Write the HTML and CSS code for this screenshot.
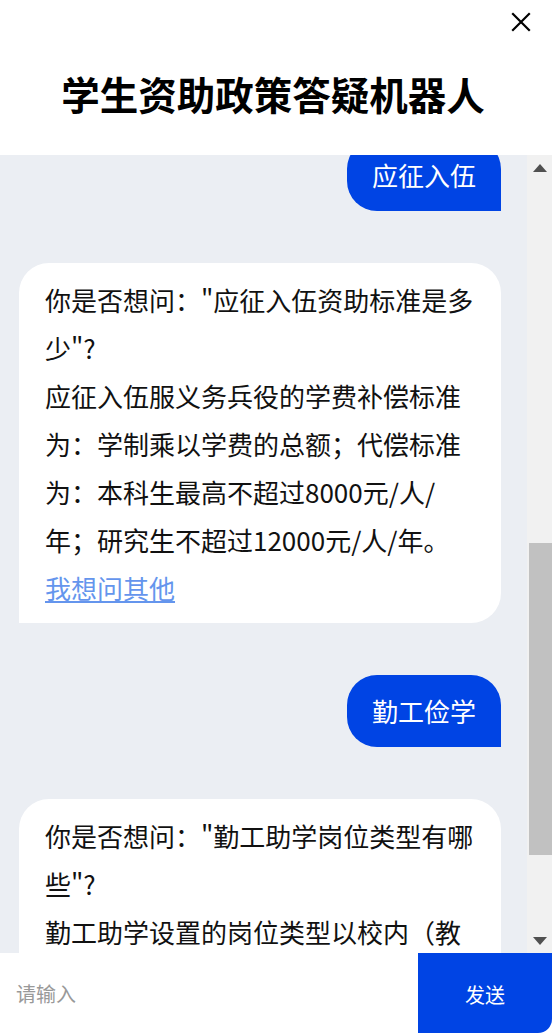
FILE: index.html
```html
<!DOCTYPE html>
<html lang="zh-CN">
<head>
  <meta charset="UTF-8" />
  <meta name="viewport" content="width=device-width, initial-scale=1" />
  <title>学生资助政策答疑机器人</title>
  <link rel="stylesheet" href="styles.css">
</head>
<body>
  <div id="app">

    <!-- 顶部标题 -->
    <div id="header">
      <button id="closeButton" aria-label="关闭">
        <svg width="20" height="20" viewBox="0 0 20 20">
          <path d="M2 2 L18 18 M18 2 L2 18" stroke="#000" stroke-width="2.2" stroke-linecap="square" fill="none" />
        </svg>
      </button>
      <h1 class="title">学生资助政策答疑机器人</h1>
    </div>

    <div id="chatArea">
      <!-- 聊天记录 -->
      <div id="chat">
        <div class="row bot">
          <div class="bubble">你好！我是学生资助政策答疑机器人，请在下方输入你想了解的资助政策问题，我会尽力为你解答。</div>
        </div>

        <div class="row user">
          <div class="bubble">助学贷款</div>
        </div>

        <div class="row bot">
          <div class="bubble">
            <div>你是否想问："国家助学贷款如何申请"?</div>
            <div>生源地信用助学贷款由学生本人和家长共同到户籍所在县（市、区）的学生资助管理中心申请办理；校园地国家助学贷款在学校学生资助管理部门申请。</div>
            <div>贷款额度为全日制本专科生每人每年不超过20000元。</div>
            <div><a href="#" class="other">我想问其他</a></div>
          </div>
        </div>

        <div class="row user" id="lastTopic">
          <div class="bubble">应征入伍</div>
        </div>

        <div class="row bot">
          <div class="bubble">
            <div>你是否想问："应征入伍资助标准是多少"?</div>
            <div>应征入伍服义务兵役的学费补偿标准为：学制乘以学费的总额；代偿标准为：本科生最高不超过8000元/人/年；研究生不超过12000元/人/年。</div>
            <div><a href="#" class="other">我想问其他</a></div>
          </div>
        </div>

        <div class="row user">
          <div class="bubble">勤工俭学</div>
        </div>

        <div class="row bot">
          <div class="bubble">
            <div>你是否想问："勤工助学岗位类型有哪些"?</div>
            <div>勤工助学设置的岗位类型以校内（教学助理、科研助理、管理助理等）为主，校外为辅。</div>
            <div><a href="#" class="other">我想问其他</a></div>
          </div>
        </div>
      </div>

      <!-- 滚动条 -->
      <div id="scrollbar">
        <div class="scrollBtn">
          <svg width="14" height="8" viewBox="0 0 14 8"><path d="M7 0 L14 8 L0 8 Z" fill="#505050" /></svg>
        </div>
        <div id="track">
          <div id="thumb"></div>
        </div>
        <div class="scrollBtn">
          <svg width="14" height="8" viewBox="0 0 14 8"><path d="M0 0 L14 0 L7 8 Z" fill="#505050" /></svg>
        </div>
      </div>
    </div>

    <!-- 输入框 -->
    <div id="composer">
      <input id="question" type="text" placeholder="请输入" />
      <button id="sendButton">发送</button>
    </div>
  </div>

  <script>
    const chat = document.getElementById("chat");
    const lastTopic = document.getElementById("lastTopic");
    const track = document.getElementById("track");
    const thumb = document.getElementById("thumb");

    function updateThumb() {
      const h = track.clientHeight;
      thumb.style.top = (chat.scrollTop / chat.scrollHeight * h) + "px";
      thumb.style.height = (chat.clientHeight / chat.scrollHeight * h) + "px";
    }

    // 停在上一次提问的位置
    chat.scrollTop = lastTopic.offsetTop + 16;
    updateThumb();

    chat.addEventListener("wheel", (e) => {
      chat.scrollTop += e.deltaY;
      updateThumb();
    });
  </script>
</body>
</html>
```

FILE: styles.css
```css
body {
  margin: 0;
  font-family: "Noto Sans CJK SC", "Microsoft YaHei", sans-serif;
  background: #fff;
}

#app {
  height: 100vh;
  display: flex;
  flex-direction: column;
}

#header {
  position: relative;
  height: 155px;
  flex-shrink: 0;
  display: flex;
  align-items: center;
  justify-content: center;
  padding-top: 31px;
  box-sizing: border-box;
  background: #fff;
}

.title {
  margin: 0 6px 0 0;
  font-size: 38.5px;
  font-weight: bold;
  line-height: 62px;
  color: #000;
}

#closeButton {
  position: absolute;
  top: 12px;
  right: 21px;
  width: 20px;
  height: 20px;
  padding: 0;
  border: none;
  background: none;
  cursor: pointer;
}

#closeButton svg {
  display: block;
}

#chatArea {
  flex: 1;
  min-height: 0;
  display: flex;
}

#chat {
  position: relative;
  flex: 1;
  overflow: hidden;
  background: #ebeef3;
  padding: 14px 26px 30px 19px;
}

#scrollbar {
  width: 25px;
  flex-shrink: 0;
  display: flex;
  flex-direction: column;
  background: #f1f1f1;
}

.scrollBtn {
  height: 25px;
  flex-shrink: 0;
  display: flex;
  align-items: center;
  justify-content: center;
}

.scrollBtn svg {
  display: block;
}

#track {
  position: relative;
  flex: 1;
}

#thumb {
  position: absolute;
  left: 2px;
  right: 0;
  background: #c1c1c1;
}

.row {
  display: flex;
  margin-bottom: 52px;
}

.row:last-child {
  margin-bottom: 0;
}

.row.user {
  justify-content: flex-end;
}

.bubble {
  font-size: 26px;
  line-height: 48px;
  word-break: break-all;
}

.bot .bubble {
  flex: 1;
  background: #fff;
  color: #111;
  padding: 13px 26px 11px 26px;
  border-radius: 30px 30px 30px 0;
}

.user .bubble {
  background: #0044e4;
  color: #fff;
  padding: 12px 25px;
  border-radius: 30px 30px 0 30px;
}

.other {
  color: #6495ed;
  text-decoration: underline;
}

#composer {
  height: 80px;
  flex-shrink: 0;
  display: flex;
  background: #fff;
}

#question {
  flex: 1;
  min-width: 0;
  border: none;
  outline: none;
  padding: 0 16px;
  font-family: inherit;
  font-size: 20px;
  color: #333;
  background: #fff;
}

#question::placeholder {
  color: #999;
}

#sendButton {
  width: 134px;
  border: none;
  background: #0044e4;
  color: #fff;
  font-family: inherit;
  font-size: 20px;
  padding-top: 3px;
  border-bottom-right-radius: 14px;
  cursor: pointer;
}
```
